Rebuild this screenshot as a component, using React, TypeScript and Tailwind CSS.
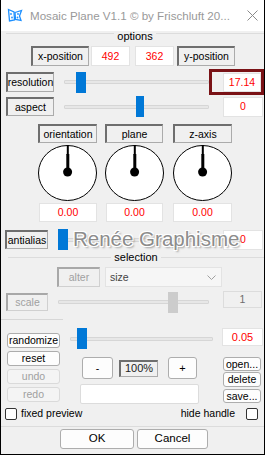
import React from 'react';

const F = "font-['Liberation_Sans',Arial,sans-serif]";

type BoxProps = { className?: string; children?: React.ReactNode; disabled?: boolean };

// sunken label box (win32 static with border)
function Sunken({ className = '', children, disabled }: BoxProps) {
  return (
    <div
      className={`flex shrink-0 items-center justify-center border-t-2 border-l-2 border-r border-b leading-none ${
        disabled
          ? 'border-t-[#a8a8a8] border-l-[#a8a8a8] border-r-[#d0d0d0] border-b-[#d0d0d0] text-[#a0a0a0]'
          : 'border-t-[#6e6e6e] border-l-[#6e6e6e] border-r-[#ababab] border-b-[#ababab]'
      } ${className}`}
    >
      {children}
    </div>
  );
}

function Val({ className = '', children, disabled }: BoxProps) {
  return (
    <div
      className={`flex shrink-0 items-center justify-center border leading-none ${
        disabled ? 'border-[#dcdcdc] bg-[#f0f0f0] text-[#6d6d6d]' : 'border-[#e3e3e3] bg-white text-[#ff0000]'
      } ${className}`}
    >
      {children}
    </div>
  );
}

function Btn({ className = '', children, disabled }: BoxProps) {
  return (
    <div
      className={`flex shrink-0 items-center justify-center rounded-[3px] border leading-none ${
        disabled ? 'border-[#dadada] bg-[#f4f4f4] text-[#a0a0a0]' : 'border-[#adadad] bg-[#fdfdfd]'
      } ${className}`}
    >
      {children}
    </div>
  );
}

function Slider({ className = '', thumb, disabled }: { className?: string; thumb: string; disabled?: boolean }) {
  return (
    <div className={`relative flex h-[21px] shrink-0 items-center ${className}`}>
      <div className="h-[4px] w-full rounded-[1px] border border-[#d6d6d6] bg-[#e7e7e7]" />
      <div className={`absolute top-0 h-[21px] ${disabled ? 'bg-[#cccccc]' : 'bg-[#0078d7]'} ${thumb}`} />
    </div>
  );
}

function Group({ label, className = '' }: { label: string; className?: string }) {
  return (
    <div className={`flex h-[14px] shrink-0 items-start ${className}`}>
      <div className="mt-[6px] flex-1 border-t border-[#dcdcdc]" />
      <span className="px-[3px] text-[11px] leading-[13px]">{label}</span>
      <div className="mt-[6px] flex-1 border-t border-[#dcdcdc]" />
    </div>
  );
}

function Dial({ className = '' }: { className?: string }) {
  return (
    <svg className={`shrink-0 ${className}`} width="59" height="56" viewBox="0 0 59 56">
      <ellipse cx="29.5" cy="28" rx="29" ry="27.5" fill="#fff" stroke="#000" strokeWidth="1" />
      <rect x="28.8" y="0" width="2" height="10" fill="#000" />
      <rect x="28.3" y="9" width="3" height="18" fill="#000" />
      <circle cx="29.6" cy="27" r="4.5" fill="#000" />
    </svg>
  );
}

function Check({ className = '' }: { className?: string }) {
  return <div className={`h-[12px] w-[12px] shrink-0 rounded-[2px] border border-[#333] bg-white ${className}`} />;
}

export default function App() {
  return (
    <div
      className={`${F} flex h-[455px] w-[265px] flex-col overflow-hidden border-x border-b border-black bg-[#f0f0f0] text-[10.5px] text-black`}
    >
      {/* title bar */}
      <div className="flex h-[31px] shrink-0 items-center bg-white">
        <svg className="ml-[6px] shrink-0" width="16" height="15" viewBox="0 0 16 15">
          <path d="M1.5 1.5 L7 4 L7.5 12 L2.5 13 Z" fill="none" stroke="#1e90ff" strokeWidth="1.3" />
          <path d="M8 4.5 L14.5 2.5 L12.5 8 L14 12.5 L8.5 11.5 Z" fill="none" stroke="#1e90ff" strokeWidth="1.3" />
          <circle cx="4" cy="6" r="0.9" fill="#1e90ff" />
          <circle cx="5" cy="9.5" r="0.9" fill="#1e90ff" />
          <circle cx="11" cy="6" r="0.9" fill="#1e90ff" />
          <circle cx="10.5" cy="9.5" r="0.9" fill="#1e90ff" />
        </svg>
        <span className="ml-[7px] whitespace-nowrap text-[11.6px] text-[#999]">
          Mosaic Plane V1.1 © by Frischluft 20...
        </span>
        <svg className="ml-auto mr-[6px] shrink-0" width="11" height="11" viewBox="0 0 11 11">
          <path d="M0.5 0.5 L10.5 10.5 M10.5 0.5 L0.5 10.5" stroke="#8a8a8a" strokeWidth="1" />
        </svg>
      </div>

      {/* options */}
      <Group label="options" className="h-[15px] pl-[5px] [&>div]:mt-[2px] [&>span]:-mt-[1px]" />

      <div className="flex h-[20px] shrink-0">
        <Sunken className="ml-[30px] w-[58px]">x-position</Sunken>
        <Val className="ml-[2px] w-[39px]">492</Val>
        <Val className="ml-[5px] w-[39px]">362</Val>
        <Sunken className="ml-[3px] w-[58px]">y-position</Sunken>
      </div>

      <div className="mt-[3px] flex h-[26px] shrink-0 items-center">
        <Sunken className="ml-[5px] h-[20px] w-[48px]">resolution</Sunken>
        <Slider className="ml-[10px] w-[145px]" thumb="left-[12px] w-[10px]" />
        <div className="flex h-[26px] w-[55px] shrink-0 items-center border-[3px] border-[#7a1216] pl-[11px]">
          <Val className="h-[19px] w-[38px]">17.14</Val>
        </div>
      </div>

      <div className="mt-[1px] flex h-[21px] shrink-0 items-center">
        <Sunken className="ml-[5px] h-[19px] w-[48px]">aspect</Sunken>
        <Slider className="ml-[10px] w-[145px]" thumb="left-[72px] w-[8px]" />
        <Val className="ml-[14px] h-[20px] w-[40px]">0</Val>
      </div>

      <div className="mt-[7px] flex h-[19px] shrink-0">
        <Sunken className="ml-[37px] w-[59px]">orientation</Sunken>
        <Sunken className="ml-[8px] w-[58px]">plane</Sunken>
        <Sunken className="ml-[10px] w-[59px]">z-axis</Sunken>
      </div>

      <div className="mt-[2px] flex h-[56px] shrink-0">
        <Dial className="ml-[37px]" />
        <Dial className="ml-[8px]" />
        <Dial className="ml-[9px]" />
      </div>

      <div className="mt-[2px] flex h-[19px] shrink-0">
        <Val className="ml-[38px] w-[58px]">0.00</Val>
        <Val className="ml-[9px] w-[57px]">0.00</Val>
        <Val className="ml-[10px] w-[59px]">0.00</Val>
      </div>

      <div className="relative mt-[7px] flex h-[21px] shrink-0 items-center">
        <Sunken className="ml-[4px] h-[19px] w-[43px]">antialias</Sunken>
        <Slider className="ml-[10px] w-[151px]" thumb="left-0 w-[10px]" />
        <Val className="ml-[14px] h-[20px] w-[40px]">0</Val>
        {/* watermark */}
        <span className="pointer-events-none absolute left-[72px] top-[-3px] whitespace-nowrap text-[20.5px] leading-[26px] text-[#8c8c8c] [text-shadow:1px_1px_0_#fff,-1px_-1px_0_#fff,1px_-1px_0_#fff,-1px_1px_0_#fff,2px_2px_2px_#9a9a9a]">
          Renée Graphisme
        </span>
      </div>

      {/* selection */}
      <Group label="selection" className="mt-[1px] pl-[7px]" />

      <div className="mt-[2px] flex h-[20px] shrink-0">
        <Sunken disabled className="ml-[56px] w-[43px]">
          alter
        </Sunken>
        <div className="ml-[5px] flex w-[117px] shrink-0 items-center border border-[#e3e3e3] bg-[#f6f6f6] pl-[4px] text-[#444]">
          <span className="leading-none">size</span>
          <svg className="ml-auto mr-[5px]" width="9" height="5" viewBox="0 0 9 5">
            <path d="M0.5 0.5 L4.5 4.5 L8.5 0.5" fill="none" stroke="#a0a0a0" strokeWidth="1" />
          </svg>
        </div>
      </div>

      <div className="mt-[4px] flex h-[22px] shrink-0 items-center">
        <Sunken disabled className="ml-[5px] h-[18px] w-[42px]">
          scale
        </Sunken>
        <Slider disabled className="ml-[10px] w-[151px]" thumb="left-[110px] w-[10px]" />
        <Val disabled className="ml-[14px] h-[17px] w-[39px] self-start">
          1
        </Val>
      </div>

      <div className="mt-[6px] w-[62px] shrink-0 border-t border-[#d7d7d7]" />

      <div className="mt-[8px] flex h-[76px] shrink-0">
        <div className="ml-[6px] flex w-[53px] shrink-0 flex-col">
          <Btn className="mt-[5px] h-[15px]">randomize</Btn>
          <Btn className="mt-[3px] h-[15px]">reset</Btn>
          <Btn disabled className="mt-[3px] h-[15px]">
            undo
          </Btn>
          <Btn disabled className="mt-[3px] h-[15px]">
            redo
          </Btn>
        </div>
        <div className="ml-[10px] flex w-[143px] shrink-0 flex-col">
          <Slider className="w-[143px]" thumb="left-[7px] w-[10px]" />
          <div className="mt-[8px] flex h-[22px] items-center">
            <Btn className="ml-[12px] h-[22px] w-[31px]">-</Btn>
            <Sunken className="ml-[6px] h-[17px] w-[39px] text-[11px] text-[#222]">100%</Sunken>
            <Btn className="ml-[10px] h-[22px] w-[29px] text-[11px]">+</Btn>
          </div>
          <div className="ml-[10px] mt-[5px] h-[20px] w-[119px] rounded-[2px] border border-[#dcdcdc] bg-white" />
        </div>
        <div className="ml-[9px] flex w-[41px] shrink-0 flex-col">
          <Val className="h-[18px] w-[41px] text-[11px]">0.05</Val>
          <Btn className="ml-[1px] mt-[11px] h-[14px] w-[38px]">open...</Btn>
          <Btn className="ml-[1px] mt-[1px] h-[15px] w-[38px]">delete</Btn>
          <Btn className="ml-[1px] mt-[2px] h-[14px] w-[38px]">save...</Btn>
        </div>
      </div>

      <div className="mt-[3px] flex h-[13px] shrink-0 items-center">
        <Check className="ml-[4px]" />
        <span className="ml-[4px] leading-none">fixed preview</span>
        <span className="ml-auto leading-none">hide handle</span>
        <Check className="ml-[11px] mr-[6px]" />
      </div>

      <div className="mt-[6px] shrink-0 border-t border-[#dcdcdc]" />

      <div className="mt-[2px] flex h-[20px] shrink-0">
        <Btn className="ml-[59px] w-[74px] text-[11.5px]">OK</Btn>
        <Btn className="ml-[3px] w-[71px] text-[11.5px]">Cancel</Btn>
      </div>
    </div>
  );
}
